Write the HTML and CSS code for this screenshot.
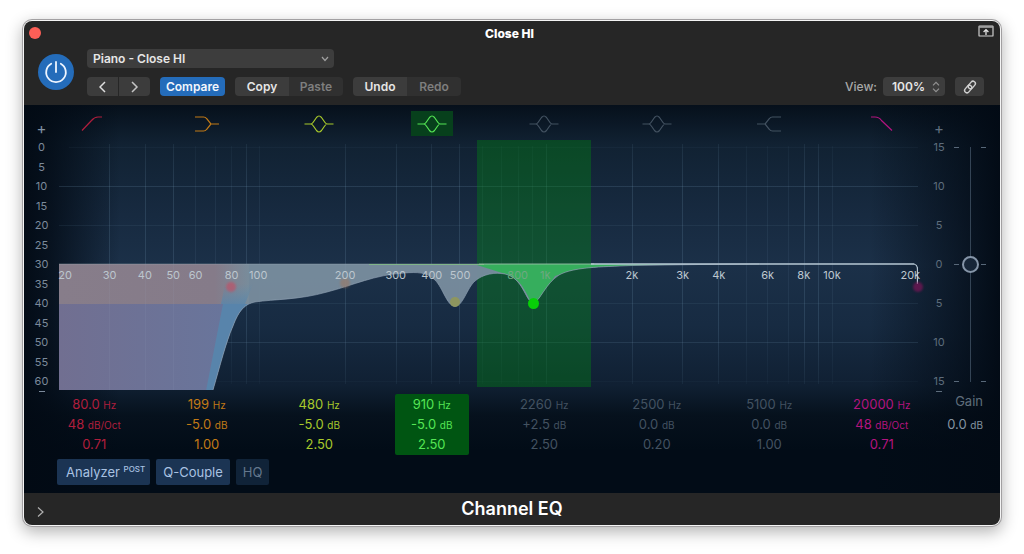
FILE: index.html
```html
<!DOCTYPE html>
<html lang="en">
<head>
<meta charset="utf-8">
<title>Channel EQ</title>
<link rel="stylesheet" href="styles.css">
</head>
<body>
<main class="window">
  <header class="header">
    <div class="titlebar">
      <button class="close" aria-label="Close"></button>
      <h1 class="title">Close HI</h1>
      <button class="icon-button pin" aria-label="Keep on top">
        <svg width="16" height="12" viewBox="0 0 16 12"><rect x="1" y="1" width="14" height="10" rx="0.6" fill="none" stroke="#cdcdcd" stroke-width="1.2"/><path d="M1 2h14" stroke="#a8a8a8" stroke-width="1.6"/><path d="M8 10V5M5.6 7 8 4.6 10.400 7" fill="none" stroke="#e4e4e4" stroke-width="1.3"/></svg>
      </button>
    </div>
    <div class="toolbar">
      <button class="power" aria-label="Power">
        <svg width="36" height="36" viewBox="0 0 36 36"><path d="M18 8v10M13.200 9.700a9.800 9.800 0 1 0 9.600 0" fill="none" stroke="#eef5ff" stroke-width="1.8" stroke-linecap="round"/></svg>
      </button>
      <div class="controls">
        <div class="select preset">
          <select aria-label="Preset"><option>Piano - Close HI</option></select>
          <svg class="chevron" width="8" height="6" viewBox="0 0 8 6"><path d="M1 1l3 3.500L7 1" fill="none" stroke="#a0a0a0" stroke-width="1.200"/></svg>
        </div>
        <div class="row">
          <div class="group">
            <button class="btn arrow" aria-label="Previous"><svg width="8" height="12" viewBox="0 0 8 12"><path d="M6 1 1 6l5 5" fill="none" stroke="#dedede" stroke-width="1.500"/></svg></button>
            <button class="btn arrow" aria-label="Next"><svg width="8" height="12" viewBox="0 0 8 12"><path d="M1 1l5 5-5 5" fill="none" stroke="#c4c4c4" stroke-width="1.500"/></svg></button>
          </div>
          <button class="btn compare">Compare</button>
          <div class="group pair"><button class="btn">Copy</button><button class="btn dim">Paste</button></div>
          <div class="group pair"><button class="btn">Undo</button><button class="btn dim">Redo</button></div>
          <label class="view-label" for="view">View:</label>
          <div class="select view">
            <select id="view"><option>100%</option></select>
            <svg class="chevron" width="8" height="12" viewBox="0 0 8 12"><path d="M1 4.300l3-3 3 3M1 7.700l3 3 3-3" fill="none" stroke="#929292" stroke-width="1.200"/></svg>
          </div>
          <button class="btn link" aria-label="Link"><svg width="14" height="14" viewBox="0 0 14 14"><g fill="none" stroke="#d0d0d0" stroke-width="1.400"><rect x="-4.200" y="-2.400" width="8.400" height="4.800" rx="2.400" transform="translate(8.800 5) rotate(-50)"/><rect x="-4.200" y="-2.400" width="8.400" height="4.800" rx="2.400" transform="translate(5.200 9) rotate(-50)"/></g></svg></button>
        </div>
      </div>
    </div>
  </header>

  <section class="eq" aria-label="Equalizer">
    <div class="bands">
      <button class="band red" aria-label="High pass"><svg width="42" height="24" viewBox="0 0 42 24"><path d="M9 18.500 18.500 8.500Q21.500 5 25 5h4"/></svg></button>
      <button class="band orange" aria-label="Low shelf"><svg width="42" height="24" viewBox="0 0 42 24"><path d="M9 5h8.500q2 0 3 1.500l4.500 5.500-4.500 5.500q-1 1.500-3 1.500H9M25 12h8"/></svg></button>
      <button class="band yellow" aria-label="Bell 1"><svg width="42" height="24" viewBox="0 0 42 24"><use href="#bell"/></svg></button>
      <button class="band green" aria-label="Bell 2"><svg width="42" height="24" viewBox="0 0 42 24"><path id="bell" d="M6.500 12h6q1.500 0 2.500-1.500l3.500-5q2.500-3 5 0l3.500 5q1 1.500 2.500 1.500h6M12.500 12q1.500 0 2.500 1.500l3.500 5q2.500 3 5 0l3.500-5q1-1.500 2.500-1.500"/></svg></button>
      <button class="band gray" aria-label="Bell 3"><svg width="42" height="24" viewBox="0 0 42 24"><use href="#bell"/></svg></button>
      <button class="band gray" aria-label="Bell 4"><svg width="42" height="24" viewBox="0 0 42 24"><use href="#bell"/></svg></button>
      <button class="band gray" aria-label="High shelf"><svg width="42" height="24" viewBox="0 0 42 24"><path d="M33 5h-8.500q-2 0-3 1.500L17 12l4.500 5.500q1 1.500 3 1.500H33M17 12H9"/></svg></button>
      <button class="band pink" aria-label="Low pass"><svg width="42" height="24" viewBox="0 0 42 24"><path d="M10 5h4q4 0 6.500 3.500L31 18.500"/></svg></button>
    </div>

    <span class="plus plus-left">+</span>
    <div class="scale scale-left"><span>0</span><span>5</span><span>10</span><span>15</span><span>20</span><span>25</span><span>30</span><span>35</span><span>40</span><span>45</span><span>50</span><span>55</span><span>60</span></div>
    <i class="minus minus-left"></i>

    <div class="plot">
      <svg class="curve" viewBox="0 0 859 253" preserveAspectRatio="none" aria-hidden="true">
        <defs>
          <linearGradient id="fade" x1="0" y1="0" x2="0" y2="1"><stop offset="0" stop-color="#fff" stop-opacity=".5"/><stop offset=".2" stop-color="#fff"/><stop offset=".75" stop-color="#fff"/><stop offset="1" stop-color="#fff" stop-opacity=".35"/></linearGradient>
          <mask id="gridmask"><rect width="859" height="253" fill="url(#fade)"/></mask>
          <linearGradient id="mauve" x1="0" y1="0" x2="1" y2="0"><stop offset="0" stop-color="#877d8a"/><stop offset=".82" stop-color="#857b89"/><stop offset="1" stop-color="#788c9b"/></linearGradient>
          <linearGradient id="pass" x1="0" y1="0" x2="1" y2="0"><stop offset="0" stop-color="#716f91"/><stop offset="1" stop-color="#69759b"/></linearGradient>
          <linearGradient id="tail" x1="0" y1="0" x2="0" y2="1"><stop offset="0" stop-color="#5c8cab" stop-opacity="0"/><stop offset="1" stop-color="#5986ab"/></linearGradient>
          <clipPath id="response"><path d="M0 126V252H154C161 228 167 204 174 188 180 172 186 166 196 164 216 161 240 162 268 154 295 147 315 137 345 135 358 134 368 134 376 142 384 150 388 168 396 168.500 404 168 408 150 416 143 424 136 436 134 446 136 464 140 466 162 474 165.500 482 162 486 146 500 137 515 129 540 129 573 127.500L640 126.500 700 126Z"/></clipPath>
        </defs>
        <g mask="url(#gridmask)" fill="none" stroke="#6c92ac" stroke-opacity=".22">
          <path d="M50.500 6V246M86.500 6V246M114.500 6V246M187.500 6V246M286.500 6V246M337.500 6V246M372.500 6V246M400.500 6V246M487.500 6V246M573.500 6V246M623.500 6V246M659.500 6V246M745.500 6V246M759.500 6V246M0 48.500H859M0 204.500H859"/>
          <path stroke-opacity=".11" d="M136.500 8V246M156.500 8V246M172.500 8V246M200.500 8V246M423.500 8V246M442.500 8V246M459.500 8V246M473.500 8V246M687.500 8V246M708.500 8V246M729.500 8V246M773.500 8V246M10 9.500H859M0 87.500H859M0 165.500H859M10 243.500H859"/>
        </g>
        <rect x="418" y="2" width="114" height="247" fill="#008c10" fill-opacity=".36"/>
        <g clip-path="url(#response)">
          <rect y="126" width="859" height="127" fill="#788c9d" fill-opacity=".96"/>
          <rect y="126" width="190" height="40" fill="url(#mauve)"/>
          <path d="M166 146h28l-8 20h-24z" fill="url(#tail)" fill-opacity=".8"/>
          <rect y="166" width="190" height="87" fill="#5884ab"/>
          <path d="M0 166H164L147 253H0Z" fill="url(#pass)"/>
          <path d="M310 126 418 127 440 134Q449 136 459 143 466 150 474 169 482 160 496 138 520 129 620 126Z" fill="#36ae5d"/>
          <path d="M310 126.500H425" stroke="#78b77d"/>
          <path d="M50.500 126V253M86.500 126V253M114.500 126V253M286.500 126V253" stroke="#a6b6c9" stroke-opacity=".08"/>
        </g>
        <path d="M154 252C161 228 167 204 174 188 180 172 186 166 196 164 216 161 240 162 268 154 295 147 315 137 345 135 358 134 368 134 376 142 384 150 388 168 396 168.500 404 168 408 150 416 143 424 136 436 134 446 136 464 140 466 162 474 165.500 482 162 486 146 500 137 515 129 540 129 573 127.500L640 126.500 700 126" fill="none" stroke="#8fa0b2" stroke-opacity=".65"/>
        <path d="M0 126H420" stroke="#a3b0bb" stroke-opacity=".4"/>
        <path d="M420 126H535" stroke="#9dc7ab" stroke-opacity=".85"/>
        <path d="M532 126H855Q858.500 127 858.500 131V146" fill="none" stroke="#b7c7d4" stroke-width="1.300"/>
      </svg>
      <i class="node node-red" style="left:20%;top:59%"></i>
      <i class="node node-orange" style="left:33.300%;top:57.500%"></i>
      <i class="node node-yellow" style="left:46.100%;top:64.800%"></i>
      <i class="node node-green" style="left:55.200%;top:65.200%"></i>
      <i class="node node-pink" style="left:100%;top:58.800%"></i>
      <span class="hz soft" style="left:.7%">20</span>
      <span class="hz soft" style="left:5.900%">30</span>
      <span class="hz soft" style="left:10%">40</span>
      <span class="hz soft" style="left:13.300%">50</span>
      <span class="hz soft" style="left:15.900%">60</span>
      <span class="hz soft" style="left:20.100%">80</span>
      <span class="hz soft" style="left:23.200%">100</span>
      <span class="hz soft" style="left:33.300%">200</span>
      <span class="hz soft" style="left:39.200%">300</span>
      <span class="hz soft" style="left:43.400%">400</span>
      <span class="hz soft" style="left:46.700%">500</span>
      <span class="hz ghost" style="left:53.400%">800</span>
      <span class="hz ghost" style="left:56.600%">1k</span>
      <span class="hz" style="left:66.700%">2k</span>
      <span class="hz" style="left:72.600%">3k</span>
      <span class="hz" style="left:76.800%">4k</span>
      <span class="hz" style="left:82.500%">6k</span>
      <span class="hz" style="left:86.700%">8k</span>
      <span class="hz" style="left:90%">10k</span>
      <span class="hz" style="left:99.100%">20k</span>
    </div>

    <span class="plus plus-right">+</span>
    <div class="scale scale-right"><span>15</span><span>10</span><span>5</span><span>0</span><span>5</span><span>10</span><span>15</span></div>
    <i class="minus minus-right"></i>
    <div class="fader">
      <div class="ticks"><i></i><i></i><i></i></div>
      <input type="range" min="-15" max="15" value="0" aria-label="Gain">
      <div class="ticks"><i></i><i></i><i></i></div>
    </div>

    <div class="values">
      <div class="value red"><p>80.0 <small>Hz</small></p><p>48 <small>dB/Oct</small></p><p>0.71</p></div>
      <div class="value orange"><p>199 <small>Hz</small></p><p>-5.0 <small>dB</small></p><p>1.00</p></div>
      <div class="value yellow"><p>480 <small>Hz</small></p><p>-5.0 <small>dB</small></p><p>2.50</p></div>
      <div class="value green"><p>910 <small>Hz</small></p><p>-5.0 <small>dB</small></p><p>2.50</p></div>
      <div class="value gray"><p>2260 <small>Hz</small></p><p>+2.5 <small>dB</small></p><p>2.50</p></div>
      <div class="value gray"><p>2500 <small>Hz</small></p><p>0.0 <small>dB</small></p><p>0.20</p></div>
      <div class="value gray"><p>5100 <small>Hz</small></p><p>0.0 <small>dB</small></p><p>1.00</p></div>
      <div class="value pink"><p>20000 <small>Hz</small></p><p>48 <small>dB/Oct</small></p><p>0.71</p></div>
    </div>
    <div class="gain"><p class="gain-name">Gain</p><p>0.0 <small>dB</small></p></div>

    <div class="modes">
      <button class="mode">Analyzer <sup>POST</sup></button>
      <button class="mode">Q-Couple</button>
      <button class="mode off">HQ</button>
    </div>
  </section>

  <footer class="footer">
    <button class="icon-button" aria-label="Expand"><svg width="8" height="12" viewBox="0 0 8 12"><path d="M2 1.500 7 6l-5 4.500" fill="none" stroke="#b0b0b0" stroke-width="1.200"/></svg></button>
    <h2 class="name">Channel EQ</h2>
  </footer>
</main>
</body>
</html>
```
FILE: styles.css
```css
* { box-sizing: border-box; }
body {
  margin: 0;
  padding: 21px 24px 28px;
  background: #fff;
  font-family: Inter, "Liberation Sans", sans-serif;
  font-size: 12px;
  color: #e6e6e6;
}
button, select, input { font: inherit; color: inherit; border: 0; margin: 0; padding: 0; background: none; }
p, h1, h2 { margin: 0; }
svg { display: block; }

.window {
  border-radius: 8px;
  background: #262626;
  box-shadow: 0 0 0 1px #f4f4f4, 0 0 0 2px #a2a0a2, 0 5px 16px 2px rgba(0, 0, 0, .3);
}

/* header */
.header { padding: 0 6px 9px 5px; }
.titlebar { display: grid; grid-template-columns: 16px 1fr 16px; align-items: center; height: 24px; }
.close { width: 12px; height: 12px; border-radius: 50%; background: #fc5f57; }
.title { padding-right: 4px; font-size: 12px; font-weight: 800; text-align: center; color: #fff; }
.icon-button { display: block; }
.pin { align-self: start; margin-top: 4px; }
.toolbar { display: flex; gap: 13px; padding: 4px 10px 0 9px; }
.power { width: 36px; height: 36px; margin-top: 5px; border-radius: 50%; background: #246cba; }
.controls { flex: 1; }
.select { position: relative; display: flex; align-items: center; height: 19px; border-radius: 4px; background: #3d3d3d; }
.select select { appearance: none; flex: 1; height: 19px; font-weight: 600; outline: 0; }
.chevron { position: absolute; right: 5px; pointer-events: none; }
.preset { width: 247px; margin-bottom: 9px; }
.preset select { padding-left: 6px; }
.row { display: flex; gap: 10px; align-items: center; }
.group { display: flex; gap: 1px; border-radius: 4px; overflow: hidden; }
.pair { gap: 0; }
.pair .btn { width: 54px; }
.btn { display: flex; align-items: center; justify-content: center; height: 19px; background: #3c3c3c; font-weight: 600; }
.btn.dim { background: #303030; color: #7e7e7e; }
.arrow { width: 31px; }
.btn.compare { width: 65px; border-radius: 4px; background: #246cba; color: #f2f6fc; }
.view-label { margin-left: auto; font-weight: 500; color: #a9a9a9; }
.view { width: 62px; margin-left: -4px; }
.view select { padding-left: 9px; }
.btn.link { width: 29px; border-radius: 4px; }

/* equalizer */
.eq {
  display: grid;
  grid-template-columns: 14px 21px minmax(0, 1fr) 8px 12px 14px 36px 12px;
  grid-template-rows: 16px 17px 253px 3px 61px 4px 26px;
  padding-bottom: 8px;
  background:
    linear-gradient(to right, rgba(2, 10, 20, .95) 0, rgba(2, 10, 20, .75) 28px, rgba(2, 10, 20, 0) 96px),
    linear-gradient(to left, rgba(2, 10, 20, .95) 0, rgba(2, 10, 20, .6) 45px, rgba(2, 10, 20, 0) 130px),
    linear-gradient(to bottom, #06101b 0, #0b1826 18px, #112233 40px, #172a40 110px, #1b3048 160px, #172b42 220px, #102033 280px, #06111d 310px, #020c17 345px, #020c17 100%);
}
.bands { grid-area: 1 / 2 / 3 / 6; display: grid; grid-template-columns: repeat(8, 1fr); justify-items: center; align-items: start; padding-top: 6px; }
.band { width: 42px; height: 25px; stroke-width: 1.2; }
.band svg { fill: none; stroke: currentColor; }
.red { color: #b01e3d; }
.orange { color: #c27a16; }
.yellow { color: #a8c92b; }
.green { color: #55e655; }
.gray { color: #435261; }
.pink { color: #b3147f; }
.band.green { background: #07401c; }

.plus { font-size: 15px; line-height: 15px; color: #8191a3; justify-self: center; z-index: 1; }
.plus-left { grid-area: 2 / 1 / 3 / 3; }
.plus-right { grid-area: 2 / 5 / 3 / 7; color: #5f6e7d; }
.scale { display: flex; flex-direction: column; justify-content: space-between; font-size: 11px; line-height: 19px; text-align: center; }
.scale-left { grid-area: 3 / 1 / 4 / 3; color: #7c8a9b; }
.scale-right { grid-area: 3 / 5 / 4 / 7; color: #5e6d7c; }
.minus { width: 6px; height: 1px; background: currentColor; justify-self: center; }
.minus-left { grid-area: 4 / 1 / 5 / 3; color: #7c8a9b; }
.minus-right { grid-area: 4 / 5 / 5 / 7; color: #5e6d7c; }

.plot { position: relative; grid-area: 3 / 3 / 4 / 4; }
.curve { width: 100%; height: 253px; }
.hz { position: absolute; top: 130px; transform: translateX(-50%); font-size: 11px; line-height: 14px; color: #bdc7d0; }
.hz.soft { color: #bcc6ce; }
.hz.ghost { color: #6ea881; }
.node { position: absolute; width: 10px; height: 10px; margin: -5px; border-radius: 50%; }
.node-red { background: #c94a60; opacity: .6; filter: blur(1px); }
.node-orange { background: #a87352; opacity: .45; filter: blur(1px); }
.node-yellow { background: #9a9d46; opacity: .7; }
.node-green { width: 11px; height: 11px; background: #08cf08; }
.node-pink { background: #7c1458; opacity: .7; filter: blur(1px); }

.fader { grid-area: 3 / 7 / 4 / 8; display: flex; justify-content: center; align-items: center; gap: 2px; padding: 0 2px; }
.ticks { display: flex; flex-direction: column; justify-content: space-between; height: 235px; }
.ticks i { width: 5px; height: 1px; background: #586879; }
.fader input {
  appearance: none;
  writing-mode: vertical-lr;
  width: 18px;
  height: 235px;
  background: linear-gradient(#344455, #344455) center / 1px 100% no-repeat;
}
.fader input::-webkit-slider-thumb {
  appearance: none;
  width: 17px;
  height: 17px;
  border: 2px solid #8595a8;
  border-radius: 50%;
  background: #172638;
}

.values { grid-area: 5 / 2 / 6 / 6; display: grid; grid-template-columns: repeat(8, 1fr); justify-items: center; }
.value { width: 74px; border-radius: 2px; text-align: center; }
.value p, .gain p { font-size: 13px; line-height: 20px; white-space: nowrap; }
small { font-size: 10px; line-height: 1; }
.value.green { background: #005512; }
.gain { grid-area: 5 / 6 / 6 / 9; padding-right: 17px; text-align: right; color: #8494a2; }
.gain .gain-name { line-height: 15px; padding-bottom: 5px; color: #5f6d7a; }

.modes { grid-area: 7 / 2 / 8 / 6; display: flex; gap: 6px; padding-left: 19px; }
.mode { height: 26px; padding: 0 7px; border-radius: 2px; background: #1b3453; color: #a9c2e2; font-size: 13px; }
.mode:first-child { padding: 0 5px 0 9px; }
.mode.off { background: #102338; color: #64778d; }
sup { font-size: 8px; line-height: 0; font-weight: 500; }

/* footer */
.footer { display: grid; grid-template-columns: 24px 1fr 24px; align-items: center; height: 32px; padding: 0 12px; }
.footer .icon-button { margin-top: 6px; }
.name { font-size: 18px; line-height: 24px; font-weight: 600; text-align: center; color: #fff; }
```
